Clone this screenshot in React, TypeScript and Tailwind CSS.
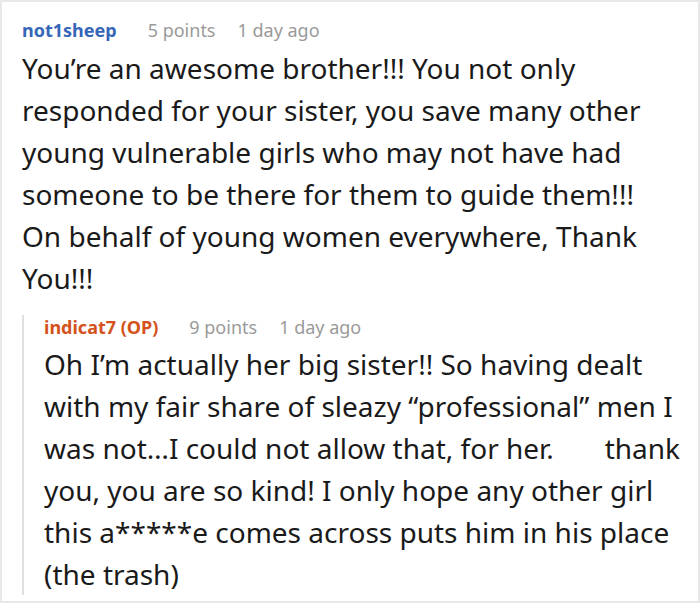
export default function App() {
  return (
    <div className="w-[700px] h-[604px] bg-white" style={{ fontFamily: '"Noto Sans", "Open Sans", sans-serif' }}>
      <div className="h-[603px] border-2 border-[#e8e8e8] pl-[20px] pr-[10px] pt-[16px]">
        {/* COMMENT */}
        <div className="flex items-baseline text-[18px] leading-[24px]">
          <span className="font-bold text-[#3566b8]">not1sheep</span>
          <span className="text-[#9a9a9a] ml-[31px]">5 points</span>
          <span className="text-[#9a9a9a] ml-[22px]">1 day ago</span>
        </div>
        <p className="text-[28px] leading-[42px] text-[#1a1a1a] mt-[5px] pr-[28px]">
          You’re an awesome brother!!! You not only responded for your sister, you save many other young vulnerable girls who may not have had someone to be there for them to guide them!!! On behalf of young women everywhere, Thank You!!!
        </p>

        {/* REPLY */}
        <div className="mt-[16px] border-l-2 border-[#e0e0e0] pl-[20px]">
          <div className="flex items-baseline text-[18px] leading-[24px]">
            <span className="font-bold text-[#d4521c]">indicat7 (OP)</span>
            <span className="text-[#9a9a9a] ml-[31px]">9 points</span>
            <span className="text-[#9a9a9a] ml-[22px]">1 day ago</span>
          </div>
          <p className="text-[28px] leading-[42px] text-[#1a1a1a] mt-[4px] -mb-[12px]">
            Oh I’m actually her big sister!! So having dealt with my fair share of sleazy “professional” men I was not…I could not allow that, for her.<span className="inline-block w-[51px]" />thank you, you are so kind! I only hope any other girl this a*****e comes across puts him in his place (the trash)
          </p>
        </div>
      </div>
    </div>
  );
}
